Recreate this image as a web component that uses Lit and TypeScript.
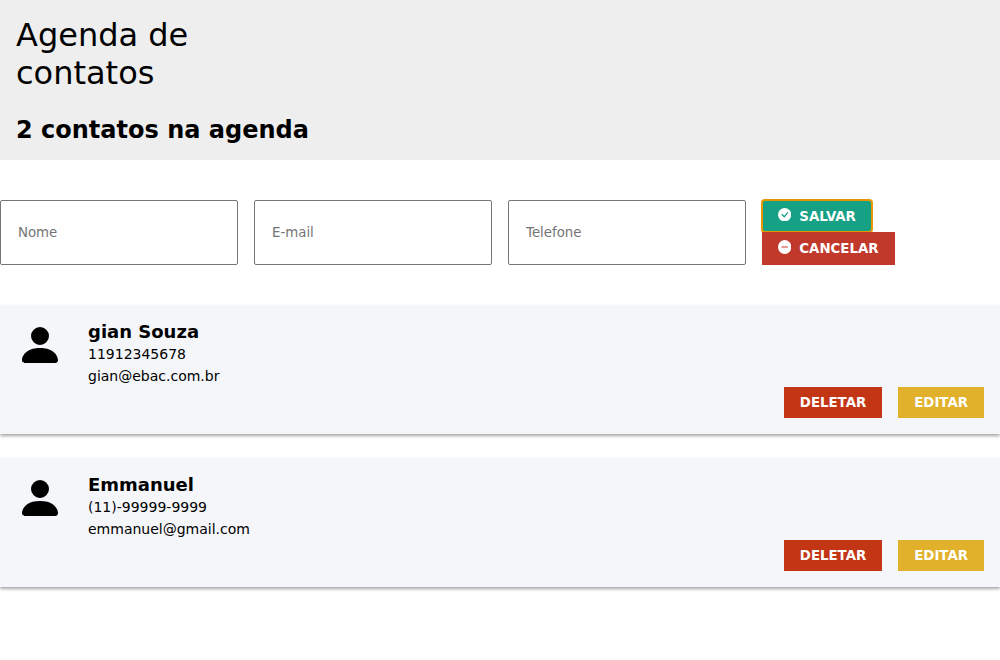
import { LitElement, html, css, svg } from "lit";
import { customElement, property, state } from "lit/decorators.js";

interface Contact {
  name: string;
  phone: string;
  email: string;
}

const personIcon = svg`<path d="M3 14s-1 0-1-1 1-4 6-4 6 3 6 4-1 1-1 1H3Zm5-6a3 3 0 1 0 0-6 3 3 0 0 0 0 6Z"></path>`;
const checkIcon = svg`<path d="M16 8A8 8 0 1 1 0 8a8 8 0 0 1 16 0zm-3.97-3.03a.75.75 0 0 0-1.08.022L7.477 9.417 5.384 7.323a.75.75 0 0 0-1.06 1.06L6.97 11.03a.75.75 0 0 0 1.079-.02l3.992-4.99a.75.75 0 0 0-.01-1.05z"></path>`;
const dashIcon = svg`<path d="M16 8A8 8 0 1 1 0 8a8 8 0 0 1 16 0zM4.5 7.5a.5.5 0 0 0 0 1h7a.5.5 0 0 0 0-1h-7z"></path>`;

const shared = css`
  * {
    box-sizing: border-box;
    margin: 0;
    padding: 0;
    font-family: "DejaVu Sans", sans-serif;
  }
  .button {
    border: none;
    padding: 8px 16px;
    color: #fff;
    font-size: 13.3333px;
    font-weight: bold;
    text-transform: uppercase;
    cursor: pointer;
  }
`;

@customElement("contact-card")
export class ContactCard extends LitElement {
  @property({ attribute: false }) contact!: Contact;

  static styles = [
    shared,
    css`
      :host {
        display: block;
      }
      .card {
        padding: 16px;
        background: #f5f6fa;
        box-shadow: 0 2px 3px rgba(0, 0, 0, 0.35);
      }
      .person {
        display: flex;
        gap: 24px;
      }
      .avatar {
        width: 48px;
        height: 48px;
        flex: none;
      }
      .name {
        font-size: 18px;
        line-height: 22px;
      }
      .line {
        font-size: 14px;
        line-height: 22px;
      }
      .actions {
        display: flex;
        justify-content: flex-end;
        gap: 16px;
      }
      .delete {
        background: #c23616;
      }
      .edit {
        background: #e1b12c;
      }
    `,
  ];

  render() {
    return html`<article class="card">
      <div class="person">
        <svg class="avatar" viewBox="0 0 16 16" fill="currentColor">${personIcon}</svg>
        <div>
          <h3 class="name">${this.contact.name}</h3>
          <p class="line">${this.contact.phone}</p>
          <p class="line">${this.contact.email}</p>
        </div>
      </div>
      <div class="actions">
        <button class="button delete">Deletar</button>
        <button class="button edit">Editar</button>
      </div>
    </article>`;
  }
}

@customElement("app-root")
export class AppRoot extends LitElement {
  @state() private contacts: Contact[] = [
    { name: "gian Souza", phone: "11912345678", email: "gian@ebac.com.br" },
    { name: "Emmanuel", phone: "(11)-99999-9999", email: "emmanuel@gmail.com" },
  ];

  static styles = [
    shared,
    css`
      :host {
        display: block;
        min-height: 100vh;
      }
      .header {
        height: 160px;
        padding: 16px;
        background: #eee;
      }
      .title {
        width: 230px;
        font-size: 32px;
        font-weight: normal;
        line-height: 38px;
      }
      .count {
        margin-top: 24px;
        font-size: 24px;
        line-height: 28px;
      }
      .form {
        display: grid;
        grid-template-columns: repeat(4, 1fr);
        column-gap: 16px;
        margin: 40px 0;
        height: 65px;
      }
      .field {
        width: 100%;
        min-width: 0;
        padding: 16px 17px;
        border: 1px solid #767676;
        border-radius: 2px;
        font-size: 13.3333px;
      }
      .field::placeholder {
        color: #757575;
      }
      .buttons {
        display: flex;
        flex-direction: column;
        align-items: flex-start;
      }
      .action {
        display: flex;
        align-items: center;
        gap: 8px;
      }
      .icon {
        width: 13.3333px;
        height: 13.3333px;
        margin-bottom: 3px;
      }
      .cancel .icon {
        height: 14px;
      }
      .save {
        height: 32px;
        background: #16a085;
        outline: auto 1px #e59700;
      }
      .cancel {
        height: 33px;
        background: #c0392b;
      }
      .list {
        display: flex;
        flex-direction: column;
        gap: 24px;
      }
    `,
  ];

  render() {
    return html`
      <header class="header">
        <h1 class="title">Agenda de contatos</h1>
        <h2 class="count">${this.contacts.length} contatos na agenda</h2>
      </header>
      <form class="form">
        <input class="field" type="text" placeholder="Nome" />
        <input class="field" type="email" placeholder="E-mail" />
        <input class="field" type="tel" placeholder="Telefone" />
        <div class="buttons">
          <button class="button action save" type="button">
            <svg class="icon" viewBox="0 0 16 16" fill="currentColor">${checkIcon}</svg>
            Salvar
          </button>
          <button class="button action cancel" type="button">
            <svg class="icon" viewBox="0 0 16 16" fill="currentColor" preserveAspectRatio="none">${dashIcon}</svg>
            Cancelar
          </button>
        </div>
      </form>
      <main class="list">
        ${this.contacts.map((c) => html`<contact-card .contact=${c}></contact-card>`)}
      </main>
    `;
  }
}
